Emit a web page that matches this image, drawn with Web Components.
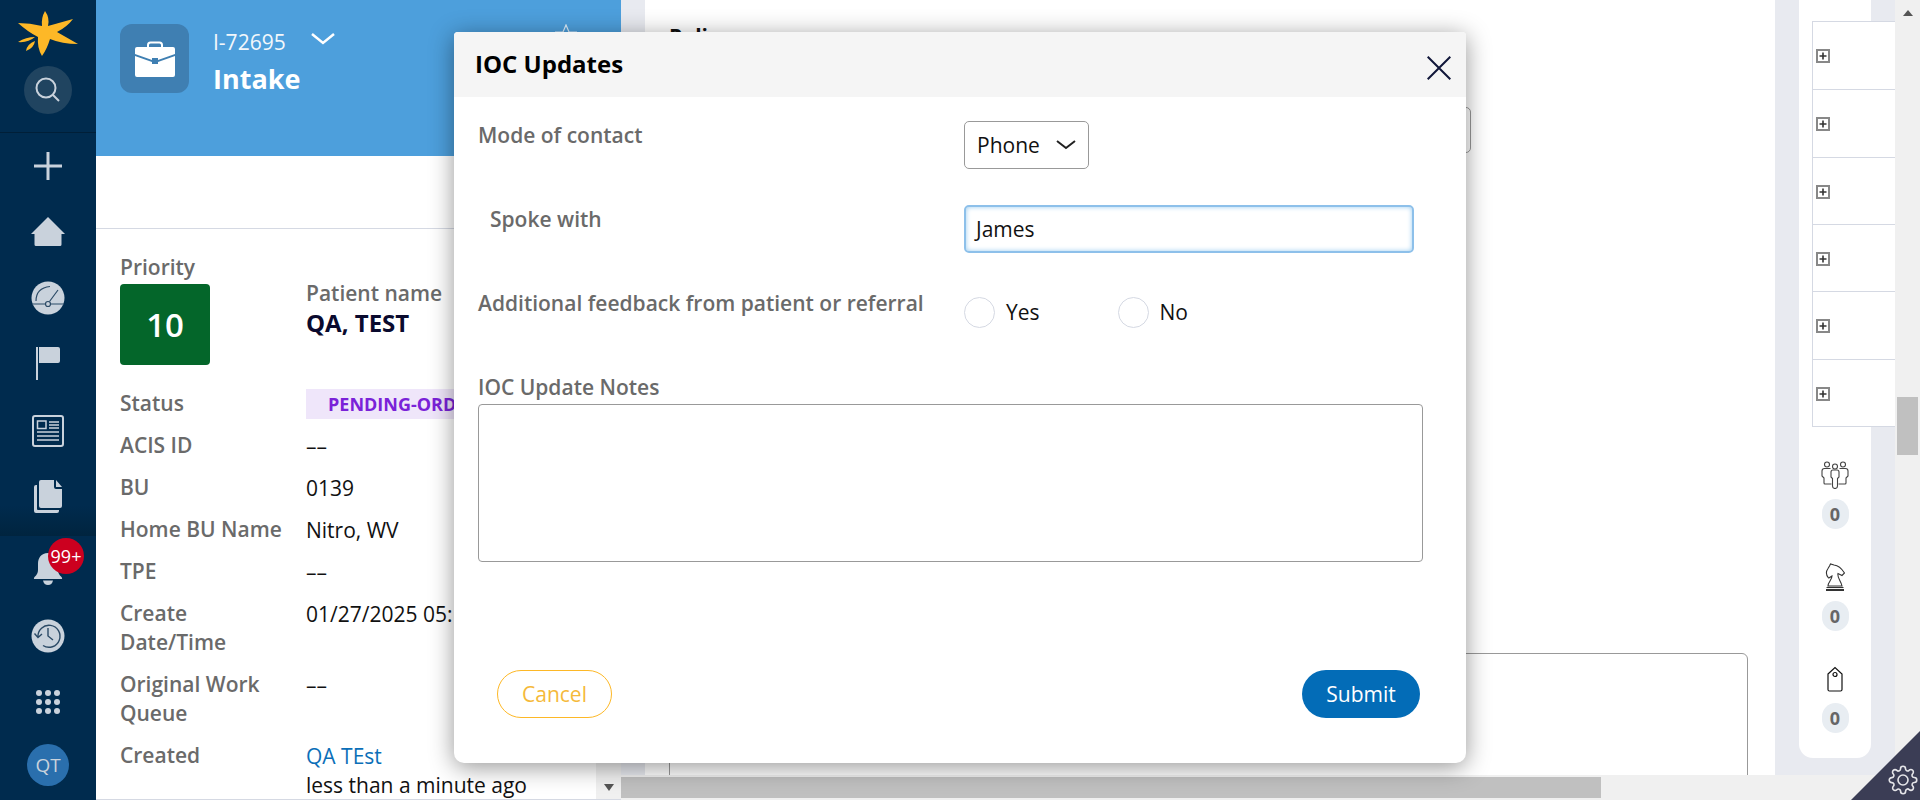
<!DOCTYPE html>
<html lang="en">
<head>
<meta charset="utf-8">
<title>IOC Updates</title>
<style>
  html, body { margin: 0; height: 800px; overflow: hidden; background: #e8eaf0; }
  body { font-family: "Open Sans", "Liberation Sans", sans-serif; font-size: 21px; color: #111; }
</style>
</head>
<body>
<app-shell>
  <nav-rail></nav-rail>
  <case-panel>
    <detail-row label="Status"><status-pill>PENDING-ORD</status-pill></detail-row>
    <detail-row label="ACIS ID">––</detail-row>
    <detail-row label="BU">0139</detail-row>
    <detail-row label="Home BU Name">Nitro, WV</detail-row>
    <detail-row label="TPE">––</detail-row>
    <detail-row label="Create Date/Time">01/27/2025 05:</detail-row>
    <detail-row label="Original Work Queue">––</detail-row>
    <detail-row label="Created"><span style="color:#0b6fb8">QA TEst</span><br>less than a minute ago</detail-row>
  </case-panel>
  <work-area></work-area>
</app-shell>
<ioc-dialog></ioc-dialog>
<settings-corner></settings-corner>

<script>
const ICON = '#c9d2dc';

class AppShell extends HTMLElement {
  connectedCallback() {
    this.attachShadow({ mode: 'open' });
    this.shadowRoot.innerHTML = `
      <style>
        :host { display: flex; width: 1920px; height: 800px; }
      </style>
      <slot></slot>`;
  }
}

class NavRail extends HTMLElement {
  connectedCallback() {
    this.attachShadow({ mode: 'open' });
    this.shadowRoot.innerHTML = `
      <style>
        :host { display: block; flex: none; width: 96px; height: 800px; background: #002b4e; }
        svg { display: block; }
        .top { height: 132px; border-bottom: 1px solid #001f38; display: flex; flex-direction: column; align-items: center; }
        .logo { margin-top: 9px; }
        .search { width: 48px; height: 48px; margin-top: 8px; border-radius: 50%; background: #204460; display: flex; align-items: center; justify-content: center; }
        .nav { height: 403px; display: grid; grid-template-rows: 66px 65px 67px 66px 67px 65px 7px; background: linear-gradient(#002b4e 372px, #00243f 403px); }
        .nav > div, .low > div { display: flex; align-items: center; justify-content: center; position: relative; }
        .low { display: grid; grid-template-rows: 66px 3px 66px 66px 60px; margin-top: -2px; }
        .badge { position: absolute; left: 48px; top: 4px; width: 36px; height: 36px; border-radius: 50%; background: #cc001f; color: #fff; font-size: 18px; line-height: 36px; text-align: center; }
        .avatar { width: 42px; height: 42px; border-radius: 50%; background: #2a6fad; color: ${ICON}; font-size: 19px; line-height: 42px; text-align: center; }
      </style>
      <div class="top">
        <svg class="logo" width="64" height="49" viewBox="16 9 64 49">
          <path fill="#fdb827" d="M45 11Q50 18 48 26L73 19Q67 27 57 32L78 44Q62 44 50 39Q47 49 42 56Q37 48 38 37Q28 32 18 23Q30 23 42 26Q41 18 45 11Z"/>
          <path fill="#fdb827" d="M18 42Q26 37 35 37Q28 43 18 42ZM26 51Q27 44 35 41Q34 48 26 51Z"/>
        </svg>
        <div class="search">
          <svg width="26" height="26" viewBox="0 0 26 26" fill="none" stroke="${ICON}" stroke-width="2">
            <circle cx="11" cy="11" r="9.500"/><path d="M18 18l6 6"/>
          </svg>
        </div>
      </div>
      <div class="nav">
        <div><svg width="28" height="28" viewBox="0 0 28 28" stroke="${ICON}" stroke-width="3"><path d="M14 0V28M0 14H28"/></svg></div>
        <div><svg width="34" height="30" viewBox="0 0 34 30"><path fill="${ICON}" d="M17 0L34 17H30.500V27.500Q30.500 29 29 29H5Q3.500 29 3.500 27.500V17H0Z"/></svg></div>
        <div><svg width="34" height="34" viewBox="0 0 34 34">
          <circle cx="17" cy="17" r="16.500" fill="${ICON}"/>
          <g fill="none" stroke="#2b4a66" stroke-width="1.200">
            <path d="M5 20Q5 7 19 5.500M1 23H14M20 23H33M18.500 20.500L27 9"/><circle cx="17" cy="23" r="2.500"/>
          </g></svg></div>
        <div><svg width="24" height="34" viewBox="0 0 24 34"><path fill="${ICON}" d="M0 0H2V33H0ZM3 0H22Q24 0 24 2V14Q24 16 22 16H3Z"/></svg></div>
        <div><svg width="32" height="32" viewBox="0 0 32 32" fill="none" stroke="${ICON}">
          <rect x="1" y="1" width="30" height="30" rx="2" stroke-width="2"/>
          <rect x="5.500" y="6" width="8.500" height="7.500" stroke-width="1.500"/>
          <path stroke-width="1.300" d="M17 7H27M17 10H27M17 13H27M5 17H27M5 21H27M5 25H27"/></svg></div>
        <div><svg width="29" height="33" viewBox="0 0 29 33"><path fill="${ICON}" d="M2 5H3V29Q3 30 4 30H25V31Q25 33 23 33H2Q0 33 0 31V7Q0 5 2 5ZM5 2Q5 0 7 0H20V7Q20 9 22 9H28V26Q28 28 26 28H7Q5 28 5 26ZM22 0L28 7H22Z"/></svg></div>
      </div>
      <div class="low">
        <div>
          <svg width="30" height="34" viewBox="0 0 30 34" style="margin-top:3px"><path fill="${ICON}" d="M15 1C8 1 5 6 5 12V18Q5 22 1.500 25Q0 27 2 27H28Q30 27 28.500 25Q25 22 25 18V12C25 6 22 1 15 1ZM10 28.500H20Q19 33 15 33Q11 33 10 28.500Z"/></svg>
          <span class="badge">99+</span>
        </div>
        <div></div>
        <div><svg width="34" height="34" viewBox="0 0 34 34">
          <circle cx="17" cy="17" r="16.500" fill="${ICON}"/>
          <g fill="none" stroke="#2b4a66" stroke-width="1.400">
            <path d="M7 18A11 11 0 1 1 12 26.500M3.500 14.500L7 18.500L11 15M17 9V17L22 21"/>
          </g></svg></div>
        <div><svg width="26" height="26" viewBox="0 0 26 26" fill="${ICON}">
          <circle cx="4" cy="4" r="3"/><circle cx="13" cy="4" r="3"/><circle cx="22" cy="4" r="3"/>
          <circle cx="4" cy="13" r="3"/><circle cx="13" cy="13" r="3"/><circle cx="22" cy="13" r="3"/>
          <circle cx="4" cy="22" r="3"/><circle cx="13" cy="22" r="3"/><circle cx="22" cy="22" r="3"/></svg></div>
        <div><span class="avatar">QT</span></div>
      </div>`;
  }
}

class CasePanel extends HTMLElement {
  connectedCallback() {
    this.attachShadow({ mode: 'open' });
    this.shadowRoot.innerHTML = `
      <style>
        :host { display: flex; flex-direction: column; flex: none; width: 525px; height: 800px; background: #fff; box-sizing: border-box; border-bottom: 1px solid #d5d9e3; overflow: hidden; }
        .banner { flex: none; height: 156px; background: #4d9fdc; display: flex; box-sizing: border-box; padding: 24px 44px 0 24px; color: #fff; }
        .tile { width: 69px; height: 69px; border-radius: 12px; background: #3f7fb2; display: flex; align-items: center; justify-content: center; }
        .names { width: 98px; margin-left: 24px; }
        .id { font-size: 21px; line-height: 28px; margin-top: 4px; color: #f2f7fb; }
        .type { font-size: 27px; font-weight: 700; line-height: 36px; margin-top: 5px; }
        .chev { margin: 9px 0 0 0; }
        .star { margin: 0 0 0 auto; }
        .tools { flex: none; height: 72px; border-bottom: 1px solid #d5d9e3; }
        .lower { flex: 1; display: flex; min-height: 0; }
        .body { flex: 1; min-width: 0; padding: 24px 0 0 24px; overflow: hidden; line-height: 29px; }
        .head { display: flex; height: 136px; }
        .prio { width: 186px; }
        .label { color: #6a6a6a; font-weight: 600; }
        .score { width: 90px; height: 81px; margin-top: 2px; border-radius: 4px; background: #04662a; color: #fff; font-size: 33px; font-weight: 600; line-height: 81px; text-align: center; }
        .who { margin-top: 26px; }
        .who b { display: block; font-size: 24px; line-height: 30px; color: #0a0a2e; }
        .scroll { flex: none; width: 25px; background: #f0f0f0; display: flex; align-items: flex-end; justify-content: center; padding-bottom: 8px; box-sizing: border-box; }
        .down { width: 0; height: 0; border: 5.500px solid transparent; border-top: 7px solid #555; border-bottom: 0; }
      </style>
      <div class="banner">
        <div class="tile">
          <svg width="40" height="36" viewBox="0 0 40 36">
            <path fill="none" stroke="#fff" stroke-width="2" d="M13 7V4Q13 1.500 15.500 1.500H24.500Q27 1.500 27 4V7"/>
            <path fill="#fff" d="M2 6H38Q40 6 40 8V13L23 19V17H17V19L0 13V8Q0 6 2 6ZM0 15L17 21V23H23V21L40 15V34Q40 36 38 36H2Q0 36 0 34Z"/>
          </svg>
        </div>
        <div class="names">
          <div class="id">I-72695</div>
          <div class="type">Intake</div>
        </div>
        <svg class="chev" width="24" height="12" viewBox="0 0 24 12" fill="none" stroke="#fff" stroke-width="2.500"><path d="M1 1L12 10L23 1"/></svg>
        <svg class="star" width="22" height="22" viewBox="0 0 22 22" fill="none" stroke="#dfeefa" stroke-width="1.200"><path d="M11 1L14 8H21L15.500 12.500L17.500 20L11 16L4.500 20L6.500 12.500L1 8H8Z"/></svg>
      </div>
      <div class="tools"></div>
      <div class="lower">
        <div class="body">
          <div class="head">
            <div class="prio">
              <div class="label">Priority</div>
              <div class="score">10</div>
            </div>
            <div class="who">
              <div class="label">Patient name</div>
              <b>QA, TEST</b>
            </div>
          </div>
          <slot></slot>
        </div>
        <div class="scroll"><span class="down"></span></div>
      </div>`;
  }
}

class DetailRow extends HTMLElement {
  connectedCallback() {
    this.attachShadow({ mode: 'open' });
    this.shadowRoot.innerHTML = `
      <style>
        :host { display: grid; grid-template-columns: 170px 1fr; column-gap: 16px; margin-bottom: 13px; line-height: 29px; }
        .k { color: #6a6a6a; font-weight: 600; }
        .v { white-space: nowrap; padding-top: 1px; margin-bottom: -1px; color: #111; }
      </style>
      <div class="k">${this.getAttribute('label')}</div>
      <div class="v"><slot></slot></div>`;
  }
}

class StatusPill extends HTMLElement {
  connectedCallback() {
    this.attachShadow({ mode: 'open' });
    this.shadowRoot.innerHTML = `
      <style>
        :host { display: block; margin-top: -1px; height: 30px; width: 260px; padding-left: 22px; box-sizing: border-box; background: #efe6fa; color: #7a22d8; font-size: 18px; font-weight: 700; line-height: 30px; }
      </style>
      <slot></slot>`;
  }
}

class WorkArea extends HTMLElement {
  connectedCallback() {
    this.attachShadow({ mode: 'open' });
    this.shadowRoot.innerHTML = `
      <style>
        :host { display: grid; flex: 1; min-width: 0; height: 800px; grid-template-rows: 775px 25px; grid-template-columns: 1fr 25px; }
        .cols { display: flex; min-width: 0; padding: 0 0 0 24px; }
        .main { flex: none; width: 1130px; background: #fff; padding: 24px 0 0 24px; box-sizing: border-box; overflow: hidden; }
        .title { font-weight: 700; line-height: 24px; color: #111; }
        .field { width: 802px; height: 46px; margin-top: 59px; box-sizing: border-box; border: 1px solid #999; border-radius: 5px; }
        .notes { width: 1079px; height: 300px; margin-top: 500px; box-sizing: border-box; border: 1px solid #999; border-radius: 6px; }
        side-rail { margin-left: 24px; }
        .v { background: #f0f0f0; display: flex; flex-direction: column; align-items: center; padding-top: 10px; box-sizing: border-box; }
        .up { width: 0; height: 0; border: 5.500px solid transparent; border-bottom: 6px solid #555; border-top: 0; }
        .vthumb { width: 21px; height: 58px; margin-top: 381px; background: #c0c0c0; }
        .h { grid-column: 1 / 3; background: #f0f0f0; padding-top: 2px; box-sizing: border-box; }
        .hthumb { width: 980px; height: 21px; background: #c0c0c0; }
      </style>
      <div class="cols">
        <div class="main">
          <div class="title">Poli</div>
          <div class="field"></div>
          <div class="notes"></div>
        </div>
        <side-rail></side-rail>
      </div>
      <div class="v"><span class="up"></span><div class="vthumb"></div></div>
      <div class="h"><div class="hthumb"></div></div>`;
  }
}

class SideRail extends HTMLElement {
  connectedCallback() {
    this.attachShadow({ mode: 'open' });
    const row = `<div class="row"><svg width="14" height="14" viewBox="0 0 14 14"><rect x="1" y="1" width="12" height="12" fill="#fff" stroke="#888" stroke-width="2"/><path d="M7 3.500V10.500M3.500 7H10.500" stroke="#333" stroke-width="1.600"/></svg></div>`;
    const count = `<span class="count">0</span>`;
    this.shadowRoot.innerHTML = `
      <style>
        :host { display: block; flex: none; width: 72px; height: 758px; background: #fff; border-radius: 0 0 14px 14px; padding: 21px 0 0 13px; box-sizing: border-box; }
        .tree { width: 83px; background: #fff; border: solid #d5d9e3; border-width: 1px 0 1px 1px; box-sizing: border-box; height: 406px; display: grid; grid-template-rows: repeat(6, 1fr); position: relative; }
        .row { border-top: 1px solid #d5d9e3; padding: 27px 0 0 3px; }
        .row:first-child { border-top: 0; }
        .row svg { display: block; }
        .items { margin: 34px 0 0 -13px; width: 72px; display: flex; flex-direction: column; align-items: center; }
        .item { height: 102px; display: flex; flex-direction: column; align-items: center; }
        .item svg { display: block; height: 28px; margin-bottom: 10px; }
        .count { width: 27px; height: 30px; border-radius: 14px; background: #e8edf2; color: #666; font-size: 18px; font-weight: 700; line-height: 30px; text-align: center; }
      </style>
      <div class="tree">${row.repeat(6)}</div>
      <div class="items">
        <div class="item">
          <svg width="28" height="28" viewBox="0 0 28 28" fill="none" stroke="#444" stroke-width="1.100">
            <circle cx="6" cy="3.500" r="2.500"/><circle cx="14" cy="5.500" r="2.500"/><circle cx="22" cy="3.500" r="2.500"/>
            <path d="M10 16V11Q10 9 12 9H16Q18 9 18 11V16L16.500 17.500V25Q16.500 27.500 14 27.500Q11.500 27.500 11.500 25V17.500Z"/>
            <path d="M9.500 7.500H3.500Q1 7.500 1 10V15L3 17V22Q3 23 4 23H10.500M18.500 7.500H24.500Q27 7.500 27 10V15L25 17V22Q25 23 24 23H17.500"/>
          </svg>${count}
        </div>
        <div class="item">
          <svg width="20" height="28" viewBox="0 0 20 28" fill="none" stroke="#333" stroke-width="1.100">
            <path d="M3 23C3 19 7 17 7 13C5.500 14 4.500 15 3.500 15C1 12 .5 9 3 5.500L4.500 3L5.500 1L9 2C14 2.500 17 6 19.500 10L17 12.500L13 10.500C12 15 16 18 17 23Z"/>
            <path d="M1.500 24.500H18.500"/><path d="M1 27H19" stroke-width="2"/>
          </svg>${count}
        </div>
        <div class="item">
          <svg width="16" height="26" viewBox="0 0 16 26" fill="none" stroke="#111" stroke-width="1.200">
            <path d="M1 8L8 1.500L15 8V23.500Q15 25 13.500 25H2.500Q1 25 1 23.500Z"/><circle cx="8" cy="8.500" r="2"/>
          </svg>${count}
        </div>
      </div>`;
  }
}

class IocDialog extends HTMLElement {
  connectedCallback() {
    this.attachShadow({ mode: 'open' });
    this.shadowRoot.innerHTML = `
      <style>
        :host { display: block; position: absolute; left: 454px; top: 32px; width: 1012px; height: 731px; background: #fff; border-radius: 4px 4px 10px 10px; box-shadow: 0 4px 24px rgba(0,0,0,.42); overflow: hidden; }
        header { height: 65px; background: #f5f5f5; display: flex; align-items: center; justify-content: space-between; padding: 0 15px 0 21px; box-sizing: border-box; }
        h2 { margin: 0 0 3px; font-size: 24px; font-weight: 700; color: #000; }
        header svg { margin-top: 6px; }
        main { padding: 24px 43px 0 24px; line-height: 29px; }
        .row { display: grid; grid-template-columns: 486px 1fr; height: 48px; margin-bottom: 36px; }
        .label { color: #6a6a6a; font-weight: 600; }
        .indent { padding-left: 12px; }
        .select { width: 125px; height: 48px; box-sizing: border-box; border: 1px solid #999; border-radius: 5px; display: flex; align-items: center; justify-content: space-between; padding: 0 12px 0 12px; }
        .input { width: 450px; height: 48px; box-sizing: border-box; border: 2px solid #8dc0ea; border-radius: 5px; box-shadow: inset 0 0 5px #9accf0; padding-left: 10px; line-height: 44px; }
        .radios { display: flex; align-items: center; height: 31px; margin-top: 8px; }
        .radio { width: 31px; height: 31px; box-sizing: border-box; border: 1px solid #d5d9e3; border-radius: 50%; margin-right: 11px; }
        .no { margin-left: 78px; }
        .notes { width: 945px; height: 158px; margin-top: 2px; box-sizing: border-box; border: 1px solid #999; border-radius: 4px; }
        footer { display: flex; justify-content: space-between; width: 923px; margin: 108px 0 0 19px; }
        button { height: 48px; border-radius: 24px; font: inherit; padding: 0; }
        .cancel { width: 115px; background: #fff; border: 1px solid #fdb827; color: #f5b93a; }
        .submit { width: 118px; background: #036cb7; border: 0; color: #fff; }
      </style>
      <header>
        <h2>IOC Updates</h2>
        <svg width="24" height="24" viewBox="0 0 24 24" fill="none" stroke="#11173a" stroke-width="2"><path d="M.7.7L23.300 23.300M23.300.7L.7 23.300"/></svg>
      </header>
      <main>
        <div class="row">
          <div class="label">Mode of contact</div>
          <div class="select">Phone
            <svg width="20" height="10" viewBox="0 0 20 10" fill="none" stroke="#222" stroke-width="2"><path d="M1 1L10 8L19 1"/></svg>
          </div>
        </div>
        <div class="row">
          <div class="label indent">Spoke with</div>
          <div class="input">James</div>
        </div>
        <div class="row">
          <div class="label">Additional feedback from patient or referral</div>
          <div class="radios"><span class="radio"></span>Yes<span class="radio no"></span>No</div>
        </div>
        <div class="label">IOC Update Notes</div>
        <div class="notes"></div>
        <footer>
          <button class="cancel">Cancel</button>
          <button class="submit">Submit</button>
        </footer>
      </main>`;
  }
}

class SettingsCorner extends HTMLElement {
  connectedCallback() {
    this.attachShadow({ mode: 'open' });
    this.shadowRoot.innerHTML = `
      <style>
        :host { display: block; position: absolute; right: 0; bottom: 0; width: 69px; height: 69px; background: #3b3d55; clip-path: polygon(100% 0, 100% 100%, 0 100%); }
        svg { position: absolute; left: 37px; top: 34px; }
      </style>
      <svg width="30" height="30" viewBox="0 0 24 24" fill="none" stroke="#e4e4e8" stroke-width="1.300">
        <circle cx="12" cy="12" r="4"/>
        <path d="M19.400 15a1.650 1.650 0 0 0 .33 1.820l.06.06a2 2 0 0 1 0 2.830 2 2 0 0 1-2.830 0l-.06-.06a1.650 1.650 0 0 0-1.820-.33 1.650 1.650 0 0 0-1 1.510V21a2 2 0 0 1-2 2 2 2 0 0 1-2-2v-.09A1.650 1.650 0 0 0 9 19.400a1.650 1.650 0 0 0-1.820.33l-.06.06a2 2 0 0 1-2.830 0 2 2 0 0 1 0-2.830l.06-.06a1.650 1.650 0 0 0 .33-1.820 1.650 1.650 0 0 0-1.510-1H3a2 2 0 0 1-2-2 2 2 0 0 1 2-2h.09A1.650 1.650 0 0 0 4.600 9a1.650 1.650 0 0 0-.33-1.820l-.06-.06a2 2 0 0 1 0-2.830 2 2 0 0 1 2.830 0l.06.06a1.650 1.650 0 0 0 1.820.33H9a1.650 1.650 0 0 0 1-1.510V3a2 2 0 0 1 2-2 2 2 0 0 1 2 2v.09a1.650 1.650 0 0 0 1 1.510 1.650 1.650 0 0 0 1.820-.33l.06-.06a2 2 0 0 1 2.830 0 2 2 0 0 1 0 2.830l-.06.06a1.650 1.650 0 0 0-.33 1.820V9a1.650 1.650 0 0 0 1.510 1H21a2 2 0 0 1 2 2 2 2 0 0 1-2 2h-.09a1.650 1.650 0 0 0-1.510 1z"/>
      </svg>`;
  }
}

customElements.define('status-pill', StatusPill);
customElements.define('detail-row', DetailRow);
customElements.define('side-rail', SideRail);
customElements.define('nav-rail', NavRail);
customElements.define('case-panel', CasePanel);
customElements.define('work-area', WorkArea);
customElements.define('ioc-dialog', IocDialog);
customElements.define('settings-corner', SettingsCorner);
customElements.define('app-shell', AppShell);
</script>
</body>
</html>
